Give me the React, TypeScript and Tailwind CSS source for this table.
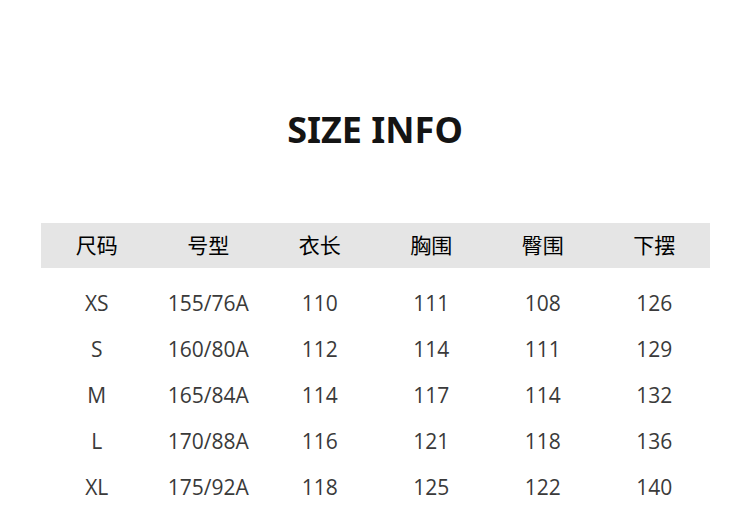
import React from "react";

const headers = ["尺码", "号型", "衣长", "胸围", "臀围", "下摆"];
const rows = [
  ["XS", "155/76A", "110", "111", "108", "126"],
  ["S", "160/80A", "112", "114", "111", "129"],
  ["M", "165/84A", "114", "117", "114", "132"],
  ["L", "170/88A", "116", "121", "118", "136"],
  ["XL", "175/92A", "118", "125", "122", "140"],
];

export default function App() {
  return (
    <div
      className="w-[750px] h-[510px] bg-white flex flex-col overflow-hidden"
      style={{ fontFamily: '"Open Sans", "Noto Sans CJK SC", sans-serif' }}
    >
      <h1
        className="mt-[112px] h-[36px] leading-[36px] text-[36px] font-bold text-center text-[#141414]"
        style={{ fontFamily: '"Noto Sans", sans-serif' }}
      >
        SIZE INFO
      </h1>
      <div className="mt-[75px] ml-[41px] w-[669px]">
        <div className="grid grid-cols-6 h-[45px] bg-[#e5e5e5] items-center">
          {headers.map((h) => (
            <div key={h} className="text-center text-[21px] text-[#000]">
              {h}
            </div>
          ))}
        </div>
        <div className="mt-[13px]">
          {rows.map((r) => (
            <div key={r[0]} className="grid grid-cols-6 h-[46px] items-center">
              {r.map((c, i) => (
                <div key={i} className="text-center text-[21px] text-[#3a3a3a]">
                  {c}
                </div>
              ))}
            </div>
          ))}
        </div>
      </div>
    </div>
  );
}
